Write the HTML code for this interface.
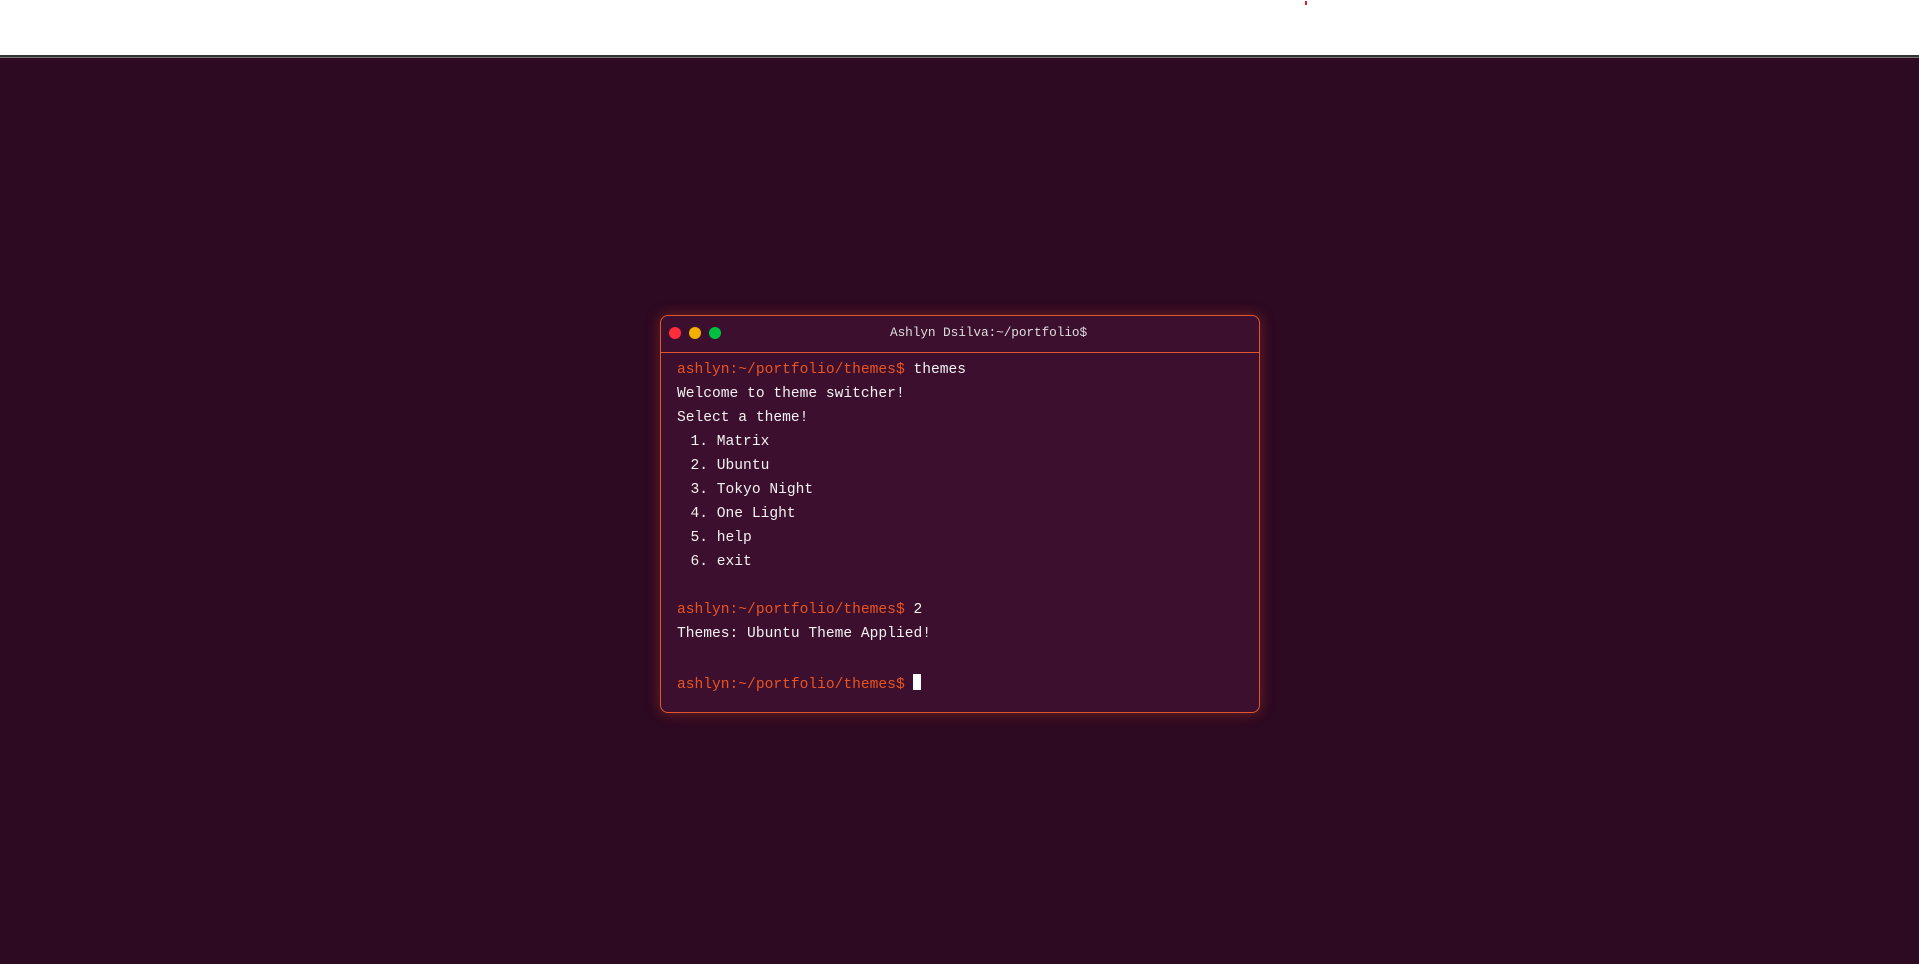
<!DOCTYPE html>
<html><head><meta charset="utf-8"><style>
html,body{margin:0;padding:0;width:1919px;height:964px;overflow:hidden;background:#fff;font-family:"Liberation Mono",monospace}
.top{position:absolute;left:0;top:0;width:1919px;height:55px;background:#fff}
.bar1{position:absolute;left:0;top:55px;width:1919px;height:2px;background:#333}
.bar2{position:absolute;left:0;top:57px;width:1919px;height:1px;background:#777}
.bg{position:absolute;left:0;top:58px;width:1919px;height:906px;background:#2d0922}
.dot{position:absolute;left:1305px;top:1px;width:2px;height:4px;background:#e02020}
.win{position:absolute;left:660px;top:315px;width:600px;height:398px;border:1px solid #e0542e;border-radius:8px;background:#3c0f2e;box-shadow:0 0 14px rgba(233,84,32,.35);box-sizing:border-box}
.head{height:36px;border-bottom:1px solid #e0542e;position:relative}
.c{position:absolute;top:11px;width:12px;height:12px;border-radius:50%}
.title{position:absolute;left:229px;top:9px;color:#ddd;font-size:12.8px;letter-spacing:-0.1px}
.body{position:absolute;left:16px;top:42px;color:#f2f2f2;font-size:14.6px;line-height:24px;white-space:pre}
.p{color:#e95420}
.ind{margin-left:-4px}
.cur{display:inline-block;width:8px;height:16px;background:#fff;vertical-align:-2px;margin-left:0px}
</style></head><body>
<div class="top"></div><div class="dot"></div>
<div class="bar1"></div><div class="bar2"></div>
<div class="bg"></div>
<div class="win">
<div class="head">
<div class="c" style="left:8px;background:#ff2d3a"></div>
<div class="c" style="left:28px;background:#f2b000"></div>
<div class="c" style="left:48px;background:#00c042"></div>
<div class="title">Ashlyn Dsilva:~/portfolio$</div>
</div>
<div class="body"><span class="p">ashlyn:~/portfolio/themes$</span> themes
Welcome to theme switcher!
Select a theme!
<span class="ind">  1. Matrix</span>
<span class="ind">  2. Ubuntu</span>
<span class="ind">  3. Tokyo Night</span>
<span class="ind">  4. One Light</span>
<span class="ind">  5. help</span>
<span class="ind">  6. exit</span>

<span class="p">ashlyn:~/portfolio/themes$</span> 2
Themes: Ubuntu Theme Applied!
<span style="display:block;height:3px"></span>
<span class="p">ashlyn:~/portfolio/themes$</span> <span class="cur"></span></div>
</div>
</body></html>
